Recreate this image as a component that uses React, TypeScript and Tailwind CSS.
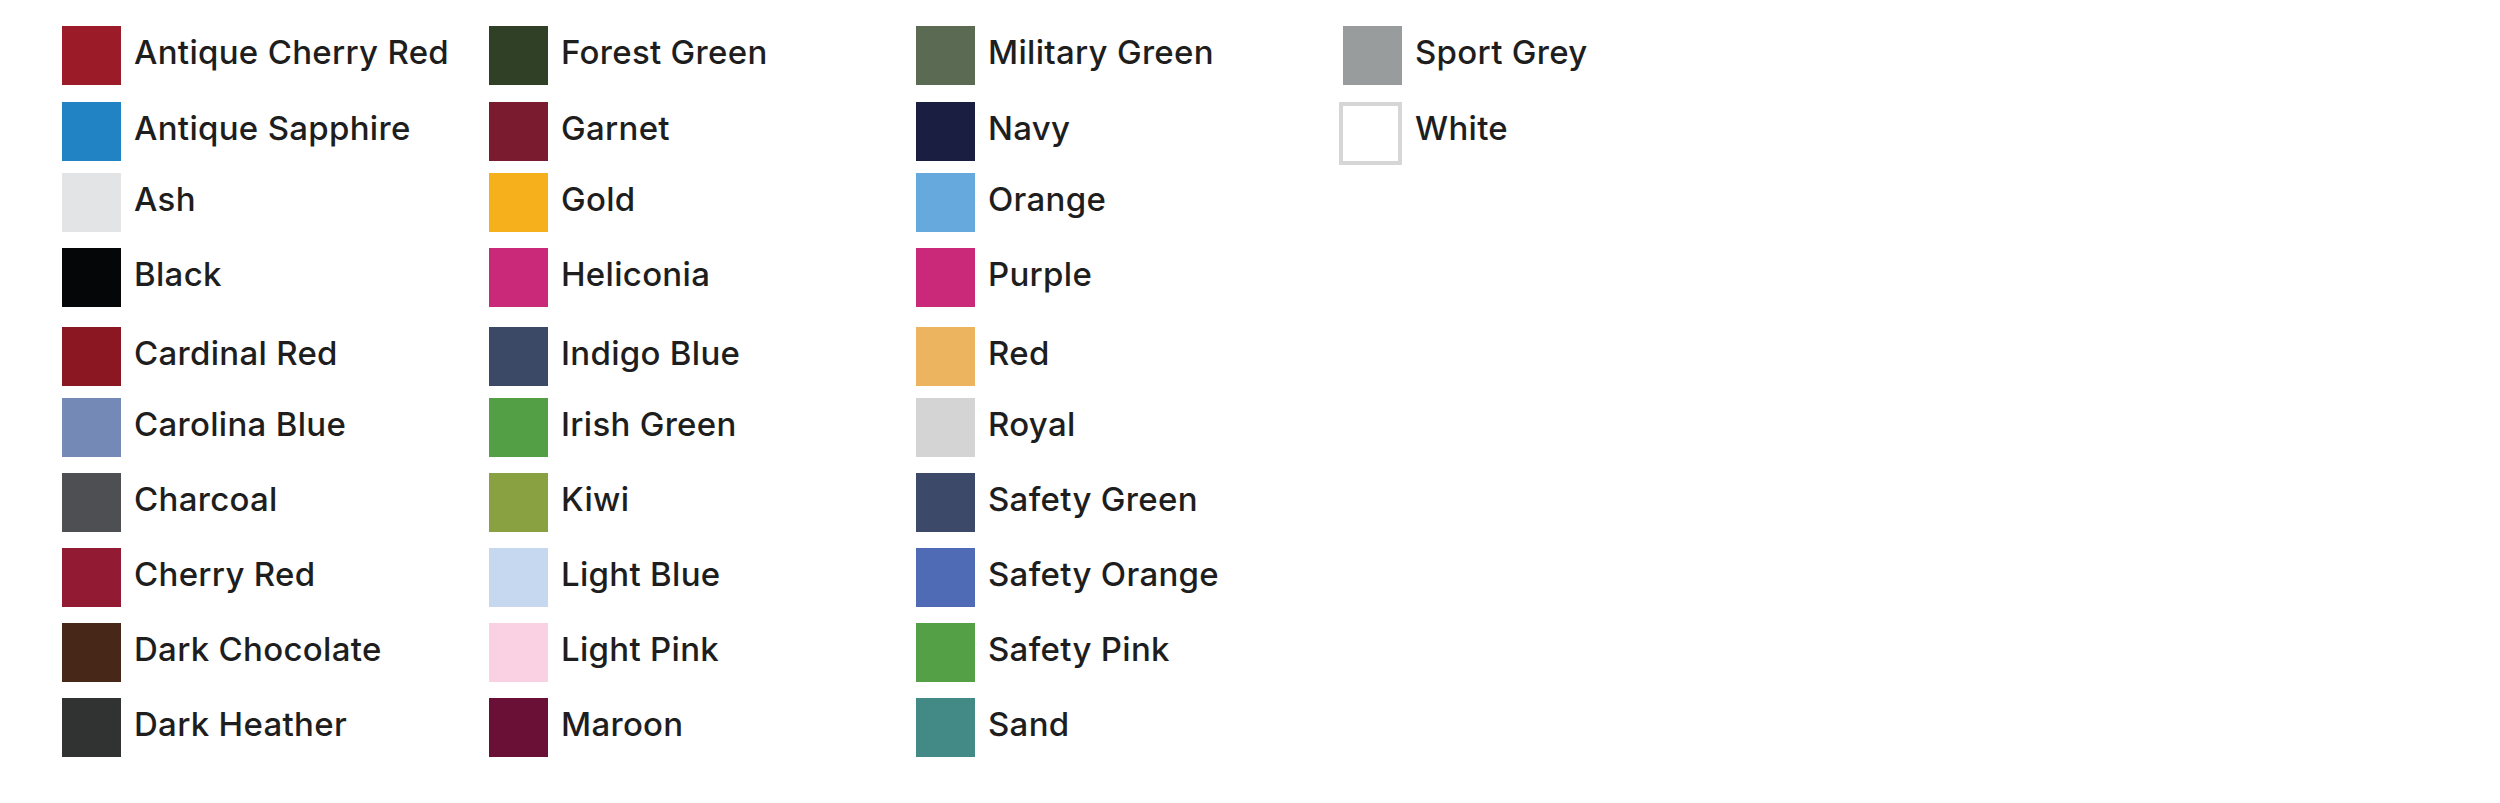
const COLORS: { name: string; hex: string; outline?: boolean }[] = [
  { name: "Antique Cherry Red", hex: "#9b1c28" },
  { name: "Antique Sapphire", hex: "#2182c4" },
  { name: "Ash", hex: "#e3e4e6" },
  { name: "Black", hex: "#050607" },
  { name: "Cardinal Red", hex: "#8a1722" },
  { name: "Carolina Blue", hex: "#7489b5" },
  { name: "Charcoal", hex: "#4e4f53" },
  { name: "Cherry Red", hex: "#921b33" },
  { name: "Dark Chocolate", hex: "#472718" },
  { name: "Dark Heather", hex: "#313232" },
  { name: "Forest Green", hex: "#2f4027" },
  { name: "Garnet", hex: "#7b1b30" },
  { name: "Gold", hex: "#f6b01b" },
  { name: "Heliconia", hex: "#ca2878" },
  { name: "Indigo Blue", hex: "#3b4966" },
  { name: "Irish Green", hex: "#529f45" },
  { name: "Kiwi", hex: "#89a140" },
  { name: "Light Blue", hex: "#c5d8ef" },
  { name: "Light Pink", hex: "#fad1e2" },
  { name: "Maroon", hex: "#6a0f36" },
  { name: "Military Green", hex: "#5b6b53" },
  { name: "Navy", hex: "#1a1f42" },
  { name: "Orange", hex: "#66a9dd" },
  { name: "Purple", hex: "#ca2878" },
  { name: "Red", hex: "#edb45f" },
  { name: "Royal", hex: "#d4d4d4" },
  { name: "Safety Green", hex: "#3c4968" },
  { name: "Safety Orange", hex: "#4f6bb5" },
  { name: "Safety Pink", hex: "#54a046" },
  { name: "Sand", hex: "#438a86" },
  { name: "Sport Grey", hex: "#989c9d" },
  { name: "White", hex: "#ffffff", outline: true },
];

function Swatch({ name, hex, outline }: { name: string; hex: string; outline?: boolean }) {
  return (
    <div className="flex items-start">
      {outline ? (
        <div className="w-[63px] h-[63px] -ml-[4px] border-[4px] border-[#d6d6d6] bg-white shrink-0" />
      ) : (
        <div className="w-[59px] h-[59px] shrink-0" style={{ backgroundColor: hex }} />
      )}
      <span className="ml-[13px] mt-[10px] text-[33px] leading-[33px] font-medium tracking-[0.3px] text-[#1e1e1e] whitespace-nowrap">
        {name}
      </span>
    </div>
  );
}

export default function App() {
  return (
    <div
      className="w-[2500px] h-[803px] bg-white pt-[26px] pl-[62px]"
      style={{ fontFamily: "Inter, 'Open Sans', sans-serif" }}
    >
      <div className="grid grid-flow-col grid-cols-[427px_427px_427px_427px] grid-rows-[76px_71px_75px_79px_71px_75px_75px_75px_75px_60px]">
        {COLORS.map((c) => (
          <Swatch key={c.name} {...c} />
        ))}
      </div>
    </div>
  );
}
